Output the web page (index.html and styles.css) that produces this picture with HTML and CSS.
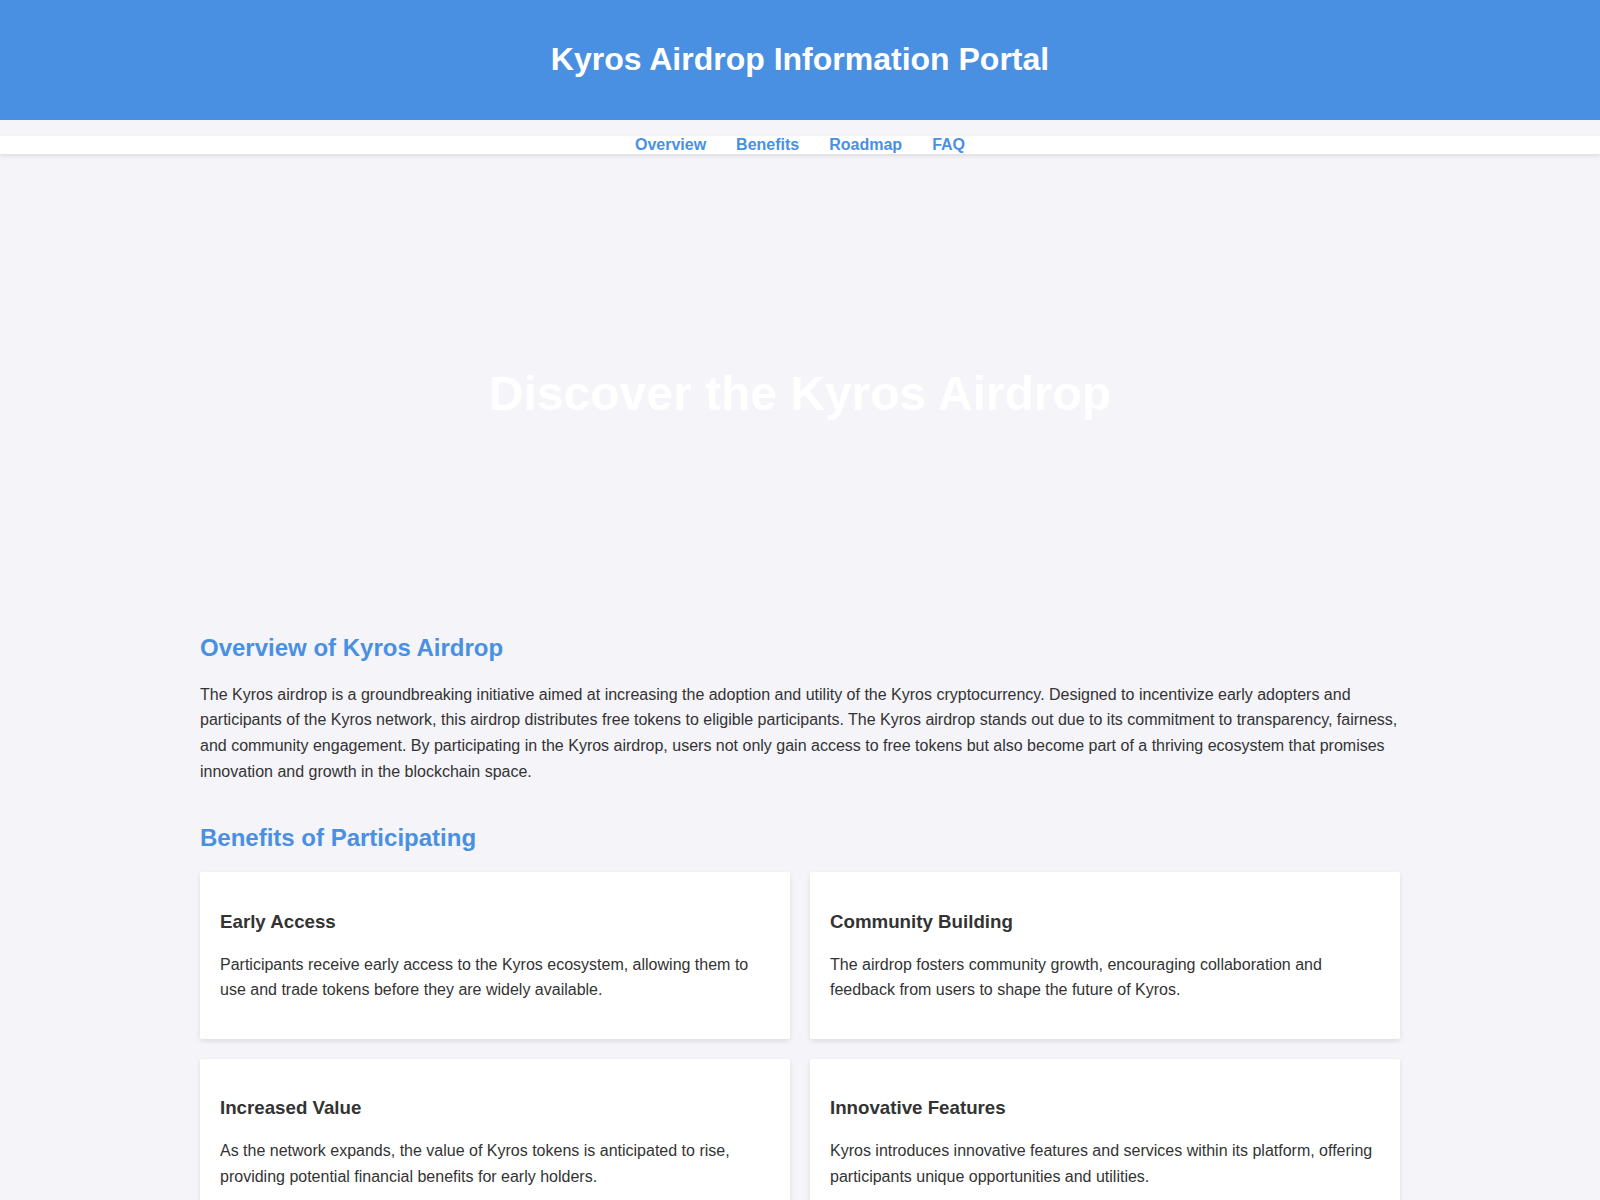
FILE: index.html
```html
<!DOCTYPE html>
<html lang="en">
<head>
    <meta charset="UTF-8">
    <meta name="viewport" content="width=device-width, initial-scale=1.0">
    <title>Kyros Airdrop Information Portal</title>
    <link rel="stylesheet" href="styles.css">
</head>
<body>
    <header>
        <h1>Kyros Airdrop Information Portal</h1>
    </header>

    <nav>
        <ul>
            <li><a href="#overview">Overview</a></li>
            <li><a href="#benefits">Benefits</a></li>
            <li><a href="#roadmap">Roadmap</a></li>
            <li><a href="#faq">FAQ</a></li>
        </ul>
    </nav>

    <main class="container">
        <div class="hero">
            <h2>Discover the Kyros Airdrop</h2>
        </div>

        <section id="overview">
            <h2>Overview of Kyros Airdrop</h2>
            <p>The Kyros airdrop is a groundbreaking initiative aimed at increasing the adoption and utility of the Kyros cryptocurrency. Designed to incentivize early adopters and participants of the Kyros network, this airdrop distributes free tokens to eligible participants. The Kyros airdrop stands out due to its commitment to transparency, fairness, and community engagement. By participating in the Kyros airdrop, users not only gain access to free tokens but also become part of a thriving ecosystem that promises innovation and growth in the blockchain space.</p>
        </section>

        <section id="benefits">
            <h2>Benefits of Participating</h2>
            <div class="cards">
                <div class="card">
                    <h3>Early Access</h3>
                    <p>Participants receive early access to the Kyros ecosystem, allowing them to use and trade tokens before they are widely available.</p>
                </div>
                <div class="card">
                    <h3>Community Building</h3>
                    <p>The airdrop fosters community growth, encouraging collaboration and feedback from users to shape the future of Kyros.</p>
                </div>
                <div class="card">
                    <h3>Increased Value</h3>
                    <p>As the network expands, the value of Kyros tokens is anticipated to rise, providing potential financial benefits for early holders.</p>
                </div>
                <div class="card">
                    <h3>Innovative Features</h3>
                    <p>Kyros introduces innovative features and services within its platform, offering participants unique opportunities and utilities.</p>
                </div>
            </div>
        </section>

        <section id="roadmap">
            <h2>Roadmap</h2>
            <div class="cards">
                <div class="card">
                    <h3>Phase 1: Launch</h3>
                    <p>Announcement of the airdrop, eligibility rules and registration for early participants.</p>
                </div>
                <div class="card">
                    <h3>Phase 2: Distribution</h3>
                    <p>Tokens are distributed to verified wallets and trading becomes available on partner exchanges.</p>
                </div>
            </div>
        </section>

        <section id="faq">
            <h2>Frequently Asked Questions</h2>
            <h3>Who can take part in the airdrop?</h3>
            <p>Anyone holding a compatible wallet who completes the registration steps before the deadline.</p>
            <h3>Are there any fees?</h3>
            <p>No. The Kyros airdrop is free; only standard network fees apply when moving tokens.</p>
        </section>
    </main>

    <footer>
        <p>&copy; 2024 Kyros Airdrop Information Portal</p>
    </footer>
</body>
</html>
```

FILE: styles.css
```css
body {
    font-family: "Liberation Sans", Arial, sans-serif;
    margin: 0;
    padding: 0;
    background-color: #f4f4f9;
    color: #333;
}

p {
    line-height: 1.6;
}

header {
    background-color: #4a90e2;
    color: white;
    padding: 20px;
    text-align: center;
}

nav ul {
    list-style: none;
    display: flex;
    justify-content: center;
    margin: 16px 0;
    padding: 0;
    background-color: white;
    box-shadow: 0 2px 4px rgba(0, 0, 0, 0.1);
}

nav li {
    margin: 0 15px;
}

nav a {
    color: #4a90e2;
    text-decoration: none;
    font-weight: bold;
}

nav a:hover {
    color: #2f6fb8;
}

.container {
    max-width: 1200px;
    margin: 0 auto;
    padding-top: 24px;
}

.hero {
    height: 400px;
    display: flex;
    align-items: center;
    justify-content: center;
    color: white;
    text-align: center;
    margin-bottom: 40px;
}

.hero h2 {
    font-size: 48px;
    margin: 0;
    color: white;
}

section {
    margin-bottom: 40px;
}

section h2 {
    color: #4a90e2;
}

.cards {
    display: grid;
    grid-template-columns: repeat(2, 1fr);
    gap: 20px;
}

.card {
    background-color: white;
    padding: 20px;
    border-radius: 2px;
    box-shadow: 0 2px 5px rgba(0, 0, 0, 0.1);
}

footer {
    text-align: center;
    padding: 10px;
    background-color: #4a90e2;
    color: white;
}
```
